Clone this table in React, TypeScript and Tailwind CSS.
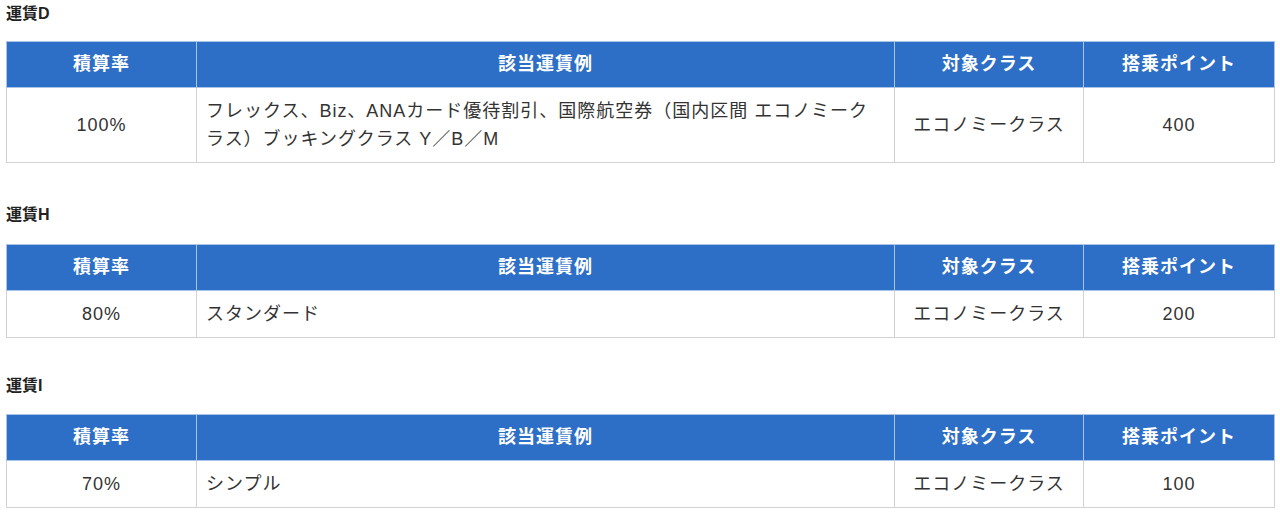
import React from 'react';

const fares = [
  {
    title: '運賃D',
    rate: '100%',
    example: 'フレックス、Biz、ANAカード優待割引、国際航空券（国内区間 エコノミークラス）ブッキングクラス Y／B／M',
    cls: 'エコノミークラス',
    points: '400',
  },
  { title: '運賃H', rate: '80%', example: 'スタンダード', cls: 'エコノミークラス', points: '200' },
  { title: '運賃I', rate: '70%', example: 'シンプル', cls: 'エコノミークラス', points: '100' },
];

function FareTable({ fare, top, gap }: { fare: (typeof fares)[number]; top: string; gap: string }) {
  return (
    <section className={top}>
      <h3 className="px-[6px] text-[16px] font-bold leading-[20px] text-[#222]">{fare.title}</h3>
      <table className={`mx-[6px] ${gap} w-[1268px] table-fixed border-collapse text-[18px] tracking-[0.055em]`}>
        <colgroup>
          <col className="w-[190px]" />
          <col className="w-[698px]" />
          <col className="w-[189px]" />
          <col className="w-[191px]" />
        </colgroup>
        <thead>
          <tr className="h-[46px] bg-[#2d6ec6] font-bold text-white">
            <th className="border border-[#a9c4e6] text-center">積算率</th>
            <th className="border border-[#a9c4e6] text-center">該当運賃例</th>
            <th className="border border-[#a9c4e6] text-center">対象クラス</th>
            <th className="border border-[#a9c4e6] text-center">搭乗ポイント</th>
          </tr>
        </thead>
        <tbody className="text-[#333]">
          <tr className="h-[46px]">
            <td className="border border-[#d2d2d2] text-center">{fare.rate}</td>
            <td className="border border-[#d2d2d2] px-[9px] py-[9px] leading-[28px]">{fare.example}</td>
            <td className="border border-[#d2d2d2] text-center">{fare.cls}</td>
            <td className="border border-[#d2d2d2] text-center">{fare.points}</td>
          </tr>
        </tbody>
      </table>
    </section>
  );
}

export default function App() {
  return (
    <div
      className="h-[513px] w-[1280px] overflow-hidden bg-white pt-[4px]"
      style={{ fontFamily: '"Liberation Sans", "Noto Sans CJK JP", sans-serif' }}
    >
      <FareTable fare={fares[0]} top="" gap="mt-[17px]" />
      <FareTable fare={fares[1]} top="mt-[42px]" gap="mt-[19px]" />
      <FareTable fare={fares[2]} top="mt-[38px]" gap="mt-[18px]" />
    </div>
  );
}
